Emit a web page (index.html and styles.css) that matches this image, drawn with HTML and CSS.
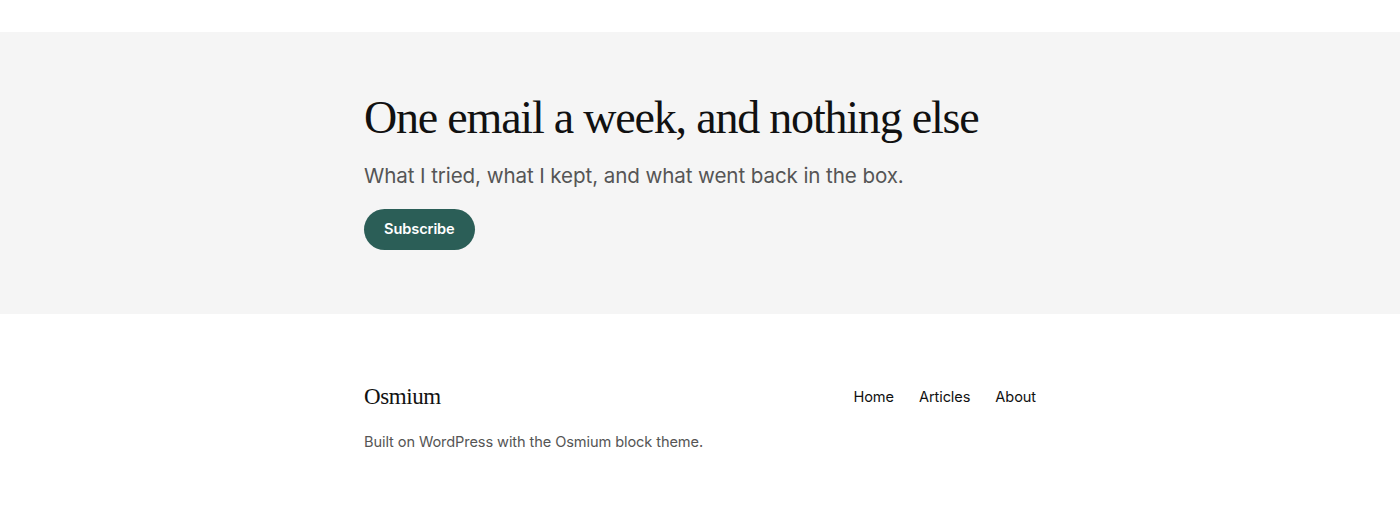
FILE: index.html
```html
<!DOCTYPE html>
<html lang="en">
<head>
    <meta charset="UTF-8">
    <title>Osmium</title>
    <link rel="stylesheet" href="styles.css">
</head>
<body>
    <div class="topGap"></div>
    <section class="signup">
        <div class="wrap">
            <h2 class="signup_title">One email a week, and nothing else</h2>
            <p class="signup_lead">What I tried, what I kept, and what went back in the box.</p>
            <a href="#" class="signup_btn">Subscribe</a>
        </div>
    </section>
    <footer class="siteFoot">
        <div class="wrap">
            <div class="siteFoot_row">
                <p class="siteFoot_name">Osmium</p>
                <ul class="siteFoot_nav">
                    <li><a href="#">Home</a></li>
                    <li><a href="#">Articles</a></li>
                    <li><a href="#">About</a></li>
                </ul>
            </div>
            <p class="siteFoot_credit">Built on WordPress with the Osmium block theme.</p>
        </div>
    </footer>
</body>
</html>
```

FILE: styles.css
```css
body{
    margin: 0;
    background: #ffffff;
    font-family: "Inter", "Liberation Sans", sans-serif;
    color: #111111;
}
.topGap{
    height: 32px;
}
.wrap{
    width: 672px;
    margin: 0 auto;
}
.signup{
    background: #f5f5f5;
    height: 282px;
    box-sizing: border-box;
    padding-top: 60px;
}
.signup_title{
    margin: 0;
    font-family: "Liberation Serif", serif;
    font-weight: normal;
    font-size: 46px;
    line-height: 52px;
    letter-spacing: -1.2px;
    color: #111111;
}
.signup_lead{
    margin: 18px 0 0;
    font-size: 20.6px;
    line-height: 28px;
    color: #555555;
    letter-spacing: -0.1px;
}
.signup_btn{
    display: inline-block;
    margin-top: 19px;
    padding: 0 20px;
    height: 41px;
    line-height: 41px;
    border-radius: 21px;
    background: #2b5e57;
    color: #ffffff;
    font-size: 14.6px;
    font-weight: 600;
    letter-spacing: -0.1px;
    text-decoration: none;
}
.siteFoot{
    padding-top: 68px;
}
.siteFoot_row{
    display: flex;
    justify-content: space-between;
    align-items: center;
}
.siteFoot_name{
    margin: 0;
    font-family: "Liberation Serif", serif;
    font-size: 23px;
    line-height: 30px;
    letter-spacing: -0.4px;
}
.siteFoot_nav{
    list-style: none;
    margin: 0 0 3px;
    padding: 0;
    display: flex;
    gap: 25px;
}
.siteFoot_nav a{
    font-size: 14.6px;
    letter-spacing: -0.1px;
    color: #111111;
    text-decoration: none;
}
.siteFoot_credit{
    margin: 21px 0 0;
    font-size: 14.6px;
    letter-spacing: -0.1px;
    color: #555555;
}
```
